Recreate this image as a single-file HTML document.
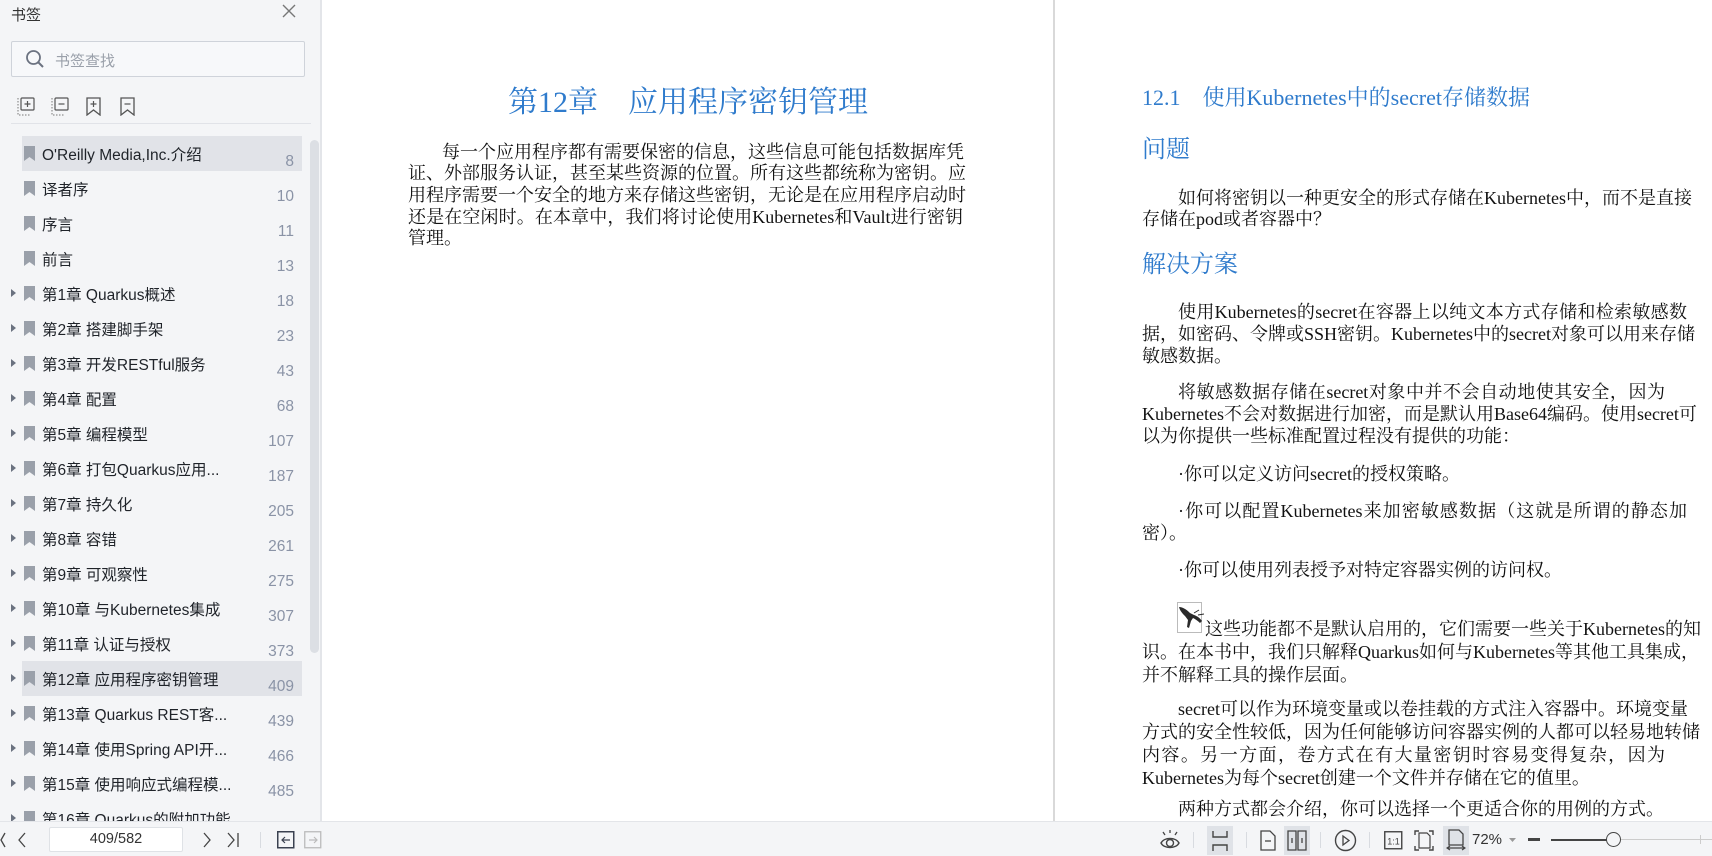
<!DOCTYPE html>
<html><head><meta charset="utf-8">
<style>
*{margin:0;padding:0;box-sizing:border-box}
body{width:1712px;height:856px;overflow:hidden;background:#fff;position:relative;font-family:"Liberation Sans","Noto Sans CJK SC",sans-serif}
.abs{position:absolute}
#side{position:absolute;left:0;top:0;width:322px;height:821px;background:#f4f5f7;border-right:2px solid #e3e5e9}
.row{position:absolute;left:22px;width:280px;height:35px}
.row.hl{background:#e1e3e8}
.row .t{position:absolute;left:20px;top:7px;font-size:15.5px;color:#1f2329;white-space:nowrap}
.row .n{position:absolute;right:8px;top:17px;font-size:15.5px;color:#8a93a6}
.row .bm{position:absolute;left:2px;top:10px}
.row .ar{position:absolute;left:-11px;top:13px;width:0;height:0;border-left:5px solid #6b7280;border-top:4px solid transparent;border-bottom:4px solid transparent}
.pg{font-family:"Liberation Serif","Noto Serif CJK SC",serif;font-size:18px;color:#111;line-height:22px;height:22px;white-space:nowrap;position:absolute}
.j{text-align:justify;text-align-last:justify}
.h{color:#2f7bcc;font-family:"Liberation Serif","Noto Serif CJK SC",serif;position:absolute;white-space:nowrap}
#bar{position:absolute;left:0;top:821px;width:1712px;height:35px;background:#f4f5f7;border-top:1px solid #e3e5e9}
.sep{position:absolute;top:10px;width:1px;height:16px;background:#d8dbe0}
.ic{position:absolute}
</style></head><body>

<div id="side">
  <div class="abs" style="left:11px;top:4px;font-size:15px;color:#333">书签</div>
  <svg class="abs" style="left:282px;top:4px" width="14" height="14" viewBox="0 0 14 14"><path d="M1 1L13 13M13 1L1 13" stroke="#777" stroke-width="1.4"/></svg>
  <div class="abs" style="left:11px;top:41px;width:294px;height:36px;border:1px solid #cfd3da;background:#f7f8fa;border-radius:2px"></div>
  <svg class="abs" style="left:25px;top:49px" width="20" height="20" viewBox="0 0 20 20"><circle cx="8.5" cy="8.5" r="6.5" stroke="#6b7280" stroke-width="1.8" fill="none"/><path d="M13.5 13.5L18 18" stroke="#6b7280" stroke-width="2"/></svg>
  <div class="abs" style="left:55px;top:50px;font-size:15px;color:#9aa0aa">书签查找</div>
  <svg class="abs" style="left:17px;top:97px" width="19" height="19" viewBox="0 0 19 19"><rect x="4" y="1" width="13" height="12" rx="1" fill="none" stroke="#555" stroke-width="1.2"/><path d="M10.5 4v6M7.5 7h6" stroke="#555" stroke-width="1.2"/><path d="M1 1v17h13" stroke="#777" stroke-width="1" stroke-dasharray="1.5 1.5" fill="none"/></svg>
  <svg class="abs" style="left:51px;top:97px" width="19" height="19" viewBox="0 0 19 19"><rect x="4" y="1" width="13" height="12" rx="1" fill="none" stroke="#555" stroke-width="1.2"/><path d="M7.5 7h6" stroke="#555" stroke-width="1.2"/><path d="M1 1v17h13" stroke="#777" stroke-width="1" stroke-dasharray="1.5 1.5" fill="none"/></svg>
  <svg class="abs" style="left:86px;top:97px" width="15" height="19" viewBox="0 0 15 19"><path d="M1 1h13v17l-6.5-5L1 18z" fill="none" stroke="#555" stroke-width="1.3"/><path d="M7.5 4v6M4.5 7h6" stroke="#555" stroke-width="1.2"/></svg>
  <svg class="abs" style="left:120px;top:97px" width="15" height="19" viewBox="0 0 15 19"><path d="M1 1h13v17l-6.5-5L1 18z" fill="none" stroke="#555" stroke-width="1.3"/><path d="M4.5 7h6" stroke="#555" stroke-width="1.2"/></svg>
  <div class="abs" style="left:11px;top:123px;width:300px;height:1px;background:#e1e3e8"></div>
  <div class="abs" style="left:310px;top:140px;width:9px;height:513px;background:#dcdfe4;border-radius:5px"></div>
</div>

<div class="abs" style="left:324px;top:0;width:730px;height:821px;background:#fff"></div>
<div class="abs" style="left:1053px;top:0;width:2px;height:821px;background:#d9d9d9"></div>
<div class="h" style="left:508px;top:84px;font-size:30px;line-height:38px">第12章&nbsp;&nbsp;&nbsp;&nbsp;应用程序密钥管理</div>
<div class="pg j" style="left:442px;top:141px;width:521px">每一个应用程序都有需要保密的信息，这些信息可能包括数据库凭</div>
<div class="pg j" style="left:408px;top:162px;width:555px">证、外部服务认证，甚至某些资源的位置。所有这些都统称为密钥。应</div>
<div class="pg j" style="left:408px;top:184px;width:555px">用程序需要一个安全的地方来存储这些密钥，无论是在应用程序启动时</div>
<div class="pg j" style="left:408px;top:206px;width:555px">还是在空闲时。在本章中，我们将讨论使用Kubernetes和Vault进行密钥</div>
<div class="pg" style="left:408px;top:227px">管理。</div>

<div class="h" style="left:1142px;top:85px;font-size:22px;line-height:26px">12.1&nbsp;&nbsp;&nbsp;&nbsp;使用Kubernetes中的secret存储数据</div>
<div class="h" style="left:1142px;top:136px;font-size:24px;line-height:28px">问题</div>
<div class="pg j" style="left:1178px;top:187px;width:509px">如何将密钥以一种更安全的形式存储在Kubernetes中，而不是直接</div>
<div class="pg" style="left:1142px;top:208px">存储在pod或者容器中？</div>
<div class="h" style="left:1142px;top:251px;font-size:24px;line-height:28px">解决方案</div>
<div class="pg j" style="left:1178px;top:301px;width:509px">使用Kubernetes的secret在容器上以纯文本方式存储和检索敏感数</div>
<div class="pg j" style="left:1142px;top:323px;width:545px">据，如密码、令牌或SSH密钥。Kubernetes中的secret对象可以用来存储</div>
<div class="pg" style="left:1142px;top:345px">敏感数据。</div>
<div class="pg j" style="left:1178px;top:381px;width:487px">将敏感数据存储在secret对象中并不会自动地使其安全，因为</div>
<div class="pg j" style="left:1142px;top:403px;width:545px">Kubernetes不会对数据进行加密，而是默认用Base64编码。使用secret可</div>
<div class="pg" style="left:1142px;top:425px">以为你提供一些标准配置过程没有提供的功能：</div>
<div class="pg" style="left:1178px;top:463px">·你可以定义访问secret的授权策略。</div>
<div class="pg j" style="left:1178px;top:500px;width:509px">·你可以配置Kubernetes来加密敏感数据（这就是所谓的静态加</div>
<div class="pg" style="left:1142px;top:522px">密）。</div>
<div class="pg" style="left:1178px;top:559px">·你可以使用列表授予对特定容器实例的访问权。</div>
<div class="abs" style="left:1177px;top:602px;width:25px;height:31px;border:1px solid #bbb;background:#fff"></div>
<svg class="abs" style="left:1178px;top:603px" width="28" height="28" viewBox="0 0 28 28"><path d="M1 4c4 0 8 3 11 6l4 2c3 1 6 3 8 6l-2 2c-2-2-5-4-7-5l-2 3-2 7-2-1 1-7-3-4C5 11 2 8 1 4z" fill="#2a2a2a"/><path d="M16 10l5-3M20 12l6-1" stroke="#2a2a2a" stroke-width="1"/></svg>
<div class="pg j" style="left:1205px;top:618px;width:482px">这些功能都不是默认启用的，它们需要一些关于Kubernetes的知</div>
<div class="pg j" style="left:1142px;top:641px;width:545px">识。在本书中，我们只解释Quarkus如何与Kubernetes等其他工具集成，</div>
<div class="pg" style="left:1142px;top:664px">并不解释工具的操作层面。</div>
<div class="pg j" style="left:1178px;top:698px;width:487px">secret可以作为环境变量或以卷挂载的方式注入容器中。环境变量</div>
<div class="pg j" style="left:1142px;top:721px;width:545px">方式的安全性较低，因为任何能够访问容器实例的人都可以轻易地转储</div>
<div class="pg j" style="left:1142px;top:744px;width:523px">内容。另一方面，卷方式在有大量密钥时容易变得复杂，因为</div>
<div class="pg" style="left:1142px;top:767px">Kubernetes为每个secret创建一个文件并存储在它的值里。</div>
<div class="pg" style="left:1178px;top:798px">两种方式都会介绍，你可以选择一个更适合你的用例的方式。</div>

<div class="row hl" style="top:136px"><svg class="bm" width="11" height="15"><path d="M0 0h11v15l-5.5-4L0 15z" fill="#9aa0aa"/></svg><div class="t">O'Reilly Media,Inc.介绍</div><div class="n">8</div></div>
<div class="row" style="top:171px"><svg class="bm" width="11" height="15"><path d="M0 0h11v15l-5.5-4L0 15z" fill="#9aa0aa"/></svg><div class="t">译者序</div><div class="n">10</div></div>
<div class="row" style="top:206px"><svg class="bm" width="11" height="15"><path d="M0 0h11v15l-5.5-4L0 15z" fill="#9aa0aa"/></svg><div class="t">序言</div><div class="n">11</div></div>
<div class="row" style="top:241px"><svg class="bm" width="11" height="15"><path d="M0 0h11v15l-5.5-4L0 15z" fill="#9aa0aa"/></svg><div class="t">前言</div><div class="n">13</div></div>
<div class="row" style="top:276px"><i class="ar"></i><svg class="bm" width="11" height="15"><path d="M0 0h11v15l-5.5-4L0 15z" fill="#9aa0aa"/></svg><div class="t">第1章 Quarkus概述</div><div class="n">18</div></div>
<div class="row" style="top:311px"><i class="ar"></i><svg class="bm" width="11" height="15"><path d="M0 0h11v15l-5.5-4L0 15z" fill="#9aa0aa"/></svg><div class="t">第2章 搭建脚手架</div><div class="n">23</div></div>
<div class="row" style="top:346px"><i class="ar"></i><svg class="bm" width="11" height="15"><path d="M0 0h11v15l-5.5-4L0 15z" fill="#9aa0aa"/></svg><div class="t">第3章 开发RESTful服务</div><div class="n">43</div></div>
<div class="row" style="top:381px"><i class="ar"></i><svg class="bm" width="11" height="15"><path d="M0 0h11v15l-5.5-4L0 15z" fill="#9aa0aa"/></svg><div class="t">第4章 配置</div><div class="n">68</div></div>
<div class="row" style="top:416px"><i class="ar"></i><svg class="bm" width="11" height="15"><path d="M0 0h11v15l-5.5-4L0 15z" fill="#9aa0aa"/></svg><div class="t">第5章 编程模型</div><div class="n">107</div></div>
<div class="row" style="top:451px"><i class="ar"></i><svg class="bm" width="11" height="15"><path d="M0 0h11v15l-5.5-4L0 15z" fill="#9aa0aa"/></svg><div class="t">第6章 打包Quarkus应用...</div><div class="n">187</div></div>
<div class="row" style="top:486px"><i class="ar"></i><svg class="bm" width="11" height="15"><path d="M0 0h11v15l-5.5-4L0 15z" fill="#9aa0aa"/></svg><div class="t">第7章 持久化</div><div class="n">205</div></div>
<div class="row" style="top:521px"><i class="ar"></i><svg class="bm" width="11" height="15"><path d="M0 0h11v15l-5.5-4L0 15z" fill="#9aa0aa"/></svg><div class="t">第8章 容错</div><div class="n">261</div></div>
<div class="row" style="top:556px"><i class="ar"></i><svg class="bm" width="11" height="15"><path d="M0 0h11v15l-5.5-4L0 15z" fill="#9aa0aa"/></svg><div class="t">第9章 可观察性</div><div class="n">275</div></div>
<div class="row" style="top:591px"><i class="ar"></i><svg class="bm" width="11" height="15"><path d="M0 0h11v15l-5.5-4L0 15z" fill="#9aa0aa"/></svg><div class="t">第10章 与Kubernetes集成</div><div class="n">307</div></div>
<div class="row" style="top:626px"><i class="ar"></i><svg class="bm" width="11" height="15"><path d="M0 0h11v15l-5.5-4L0 15z" fill="#9aa0aa"/></svg><div class="t">第11章 认证与授权</div><div class="n">373</div></div>
<div class="row hl" style="top:661px"><i class="ar"></i><svg class="bm" width="11" height="15"><path d="M0 0h11v15l-5.5-4L0 15z" fill="#9aa0aa"/></svg><div class="t">第12章 应用程序密钥管理</div><div class="n">409</div></div>
<div class="row" style="top:696px"><i class="ar"></i><svg class="bm" width="11" height="15"><path d="M0 0h11v15l-5.5-4L0 15z" fill="#9aa0aa"/></svg><div class="t">第13章 Quarkus REST客...</div><div class="n">439</div></div>
<div class="row" style="top:731px"><i class="ar"></i><svg class="bm" width="11" height="15"><path d="M0 0h11v15l-5.5-4L0 15z" fill="#9aa0aa"/></svg><div class="t">第14章 使用Spring API开...</div><div class="n">466</div></div>
<div class="row" style="top:766px"><i class="ar"></i><svg class="bm" width="11" height="15"><path d="M0 0h11v15l-5.5-4L0 15z" fill="#9aa0aa"/></svg><div class="t">第15章 使用响应式编程模...</div><div class="n">485</div></div>
<div class="row" style="top:801px"><i class="ar"></i><svg class="bm" width="11" height="15"><path d="M0 0h11v15l-5.5-4L0 15z" fill="#9aa0aa"/></svg><div class="t">第16章 Quarkus的附加功能</div></div>

<div id="bar">
  <svg class="ic" style="left:0;top:10px" width="6" height="16"><path d="M5 1L1 8l4 7" stroke="#444" fill="none" stroke-width="1.3"/></svg>
  <svg class="ic" style="left:17px;top:10px" width="10" height="16"><path d="M8 1L2 8l6 7" stroke="#444" fill="none" stroke-width="1.3"/></svg>
  <div class="abs" style="left:49px;top:5px;width:134px;height:25px;background:#fff;border:1px solid #dfe2e6;border-radius:2px;text-align:center;font-size:14.5px;line-height:23px;color:#333">409/582</div>
  <svg class="ic" style="left:202px;top:10px" width="10" height="16"><path d="M2 1l6 7-6 7" stroke="#444" fill="none" stroke-width="1.3"/></svg>
  <svg class="ic" style="left:226px;top:10px" width="14" height="16"><path d="M2 1l6 7-6 7M12 1v14" stroke="#444" fill="none" stroke-width="1.3"/></svg>
  <div class="sep" style="left:260px"></div>
  <svg class="ic" style="left:277px;top:9px" width="18" height="18"><rect x="0.75" y="0.75" width="16" height="16" fill="none" stroke="#3a4150" stroke-width="1.5"/><path d="M13 9H5M8 6L5 9l3 3" stroke="#3a4150" fill="none" stroke-width="1.2"/></svg>
  <svg class="ic" style="left:304px;top:9px" width="18" height="18"><rect x="0.75" y="0.75" width="16" height="16" fill="none" stroke="#bbb" stroke-width="1.3"/><path d="M5 9h8M10 6l3 3-3 3" stroke="#bbb" fill="none" stroke-width="1.2"/></svg>

  <svg class="ic" style="left:1159px;top:6px" width="22" height="24" viewBox="0 0 22 24"><path d="M2 15c3-6 15-6 18 0c-3 6-15 6-18 0z" fill="none" stroke="#444" stroke-width="1.4"/><circle cx="11" cy="15" r="3.5" fill="none" stroke="#444" stroke-width="1.4"/><path d="M11 2v3M4 4l2 3M18 4l-2 3" stroke="#444" stroke-width="1.3"/></svg>
  <div class="sep" style="left:1193px"></div>
  <div class="abs" style="left:1207px;top:4px;width:26px;height:29px;background:#dfe2e7"></div>
  <svg class="ic" style="left:1210px;top:9px" width="20" height="20"><path d="M3 0v6h14V0M3 20v-6h14v6" stroke="#444" fill="none" stroke-width="1.4"/></svg>
  <div class="sep" style="left:1246px"></div>
  <svg class="ic" style="left:1260px;top:8px" width="16" height="21"><path d="M1 1h9l5 5v14H1z" fill="none" stroke="#444" stroke-width="1.3"/><path d="M5 11h6" stroke="#444" stroke-width="1.3"/></svg>
  <div class="abs" style="left:1284px;top:4px;width:26px;height:29px;background:#dfe2e7"></div>
  <svg class="ic" style="left:1287px;top:8px" width="20" height="21"><path d="M1 1h8v19H1zM11 1h8v19h-8z" fill="none" stroke="#444" stroke-width="1.3"/><path d="M5 8v5M15 8v5" stroke="#444" stroke-width="1.3"/></svg>
  <div class="sep" style="left:1320px"></div>
  <svg class="ic" style="left:1334px;top:7px" width="23" height="23"><circle cx="11.5" cy="11.5" r="10" fill="none" stroke="#444" stroke-width="1.4"/><path d="M9 7v9l6-4.5z" fill="none" stroke="#444" stroke-width="1.3"/></svg>
  <div class="sep" style="left:1369px"></div>
  <svg class="ic" style="left:1384px;top:9px" width="19" height="19"><rect x="0.75" y="0.75" width="17" height="17" fill="none" stroke="#444" stroke-width="1.4"/><text x="9.5" y="13.5" font-size="9" text-anchor="middle" fill="#444" font-family="Liberation Sans">1:1</text></svg>
  <svg class="ic" style="left:1414px;top:8px" width="20" height="21"><path d="M1 5V1h4M15 1h4v4M19 16v4h-4M5 20H1v-4" stroke="#444" fill="none" stroke-width="1.4"/><path d="M5 3h8l3 3v12H5z" fill="none" stroke="#444" stroke-width="1.2"/></svg>
  <div class="abs" style="left:1443px;top:4px;width:26px;height:29px;background:#dfe2e7"></div>
  <svg class="ic" style="left:1446px;top:7px" width="20" height="22"><path d="M3 1h10l4 4v11H3z" fill="none" stroke="#444" stroke-width="1.3"/><path d="M1 19h18M4 17l-3 2 3 2M16 17l3 2-3 2" stroke="#444" fill="none" stroke-width="1.2"/></svg>
  <div class="abs" style="left:1472px;top:9px;font-size:15px;color:#333">72%</div>
  <svg class="ic" style="left:1509px;top:16px" width="7" height="5"><path d="M0 0h7L3.5 4z" fill="#999"/></svg>
  <div class="abs" style="left:1528px;top:16px;width:12px;height:3px;background:#444"></div>
  <div class="abs" style="left:1551px;top:17px;width:60px;height:1.5px;background:#444"></div>
  <div class="abs" style="left:1621px;top:17px;width:91px;height:1px;background:#ccc"></div>
  <div class="abs" style="left:1606px;top:10px;width:15px;height:15px;border:1.5px solid #444;border-radius:50%;background:#f4f5f7"></div>
  <div class="abs" style="left:1700px;top:13px;width:1px;height:9px;background:#ccc"></div>
</div>
</body></html>
